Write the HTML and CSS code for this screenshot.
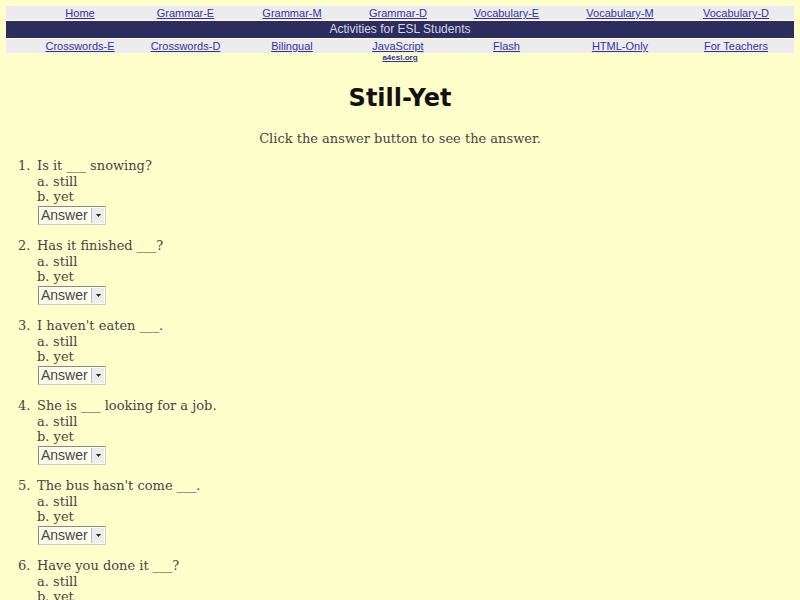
FILE: index.html
```html
<!DOCTYPE html>
<html>
<head>
<meta charset="utf-8">
<link rel="stylesheet" href="styles.css">
</head>
<body>
<div class="page">
  <div class="nav">
    <div class="row links">
      <a class="c1" href="#">Home</a>
      <a href="#">Grammar-E</a>
      <a href="#">Grammar-M</a>
      <a href="#">Grammar-D</a>
      <a href="#">Vocabulary-E</a>
      <a href="#">Vocabulary-M</a>
      <a href="#">Vocabulary-D</a>
    </div>
    <div class="bar">Activities for ESL Students</div>
    <div class="row links">
      <a class="c1" href="#">Crosswords-E</a>
      <a href="#">Crosswords-D</a>
      <a href="#">Bilingual</a>
      <a href="#">JavaScript</a>
      <a href="#">Flash</a>
      <a href="#">HTML-Only</a>
      <a href="#">For Teachers</a>
    </div>
  </div>
  <div class="site"><a href="#">a4esl.org</a></div>
  <h1 class="title">Still-Yet</h1>
  <p class="intro">Click the answer button to see the answer.</p>
  <ol class="quiz">
    <li>
      <div class="q">Is it ___ snowing?</div>
      <div class="opt">a. still</div>
      <div class="opt">b. yet</div>
      <div class="sel"><span class="sel-text">Answer</span><span class="sel-btn"><svg width="5" height="3" viewBox="0 0 5 3"><polygon points="0,0 5,0 2.5,3" fill="#222"/></svg></span></div>
    </li>
    <li>
      <div class="q">Has it finished ___?</div>
      <div class="opt">a. still</div>
      <div class="opt">b. yet</div>
      <div class="sel"><span class="sel-text">Answer</span><span class="sel-btn"><svg width="5" height="3" viewBox="0 0 5 3"><polygon points="0,0 5,0 2.5,3" fill="#222"/></svg></span></div>
    </li>
    <li>
      <div class="q">I haven't eaten ___.</div>
      <div class="opt">a. still</div>
      <div class="opt">b. yet</div>
      <div class="sel"><span class="sel-text">Answer</span><span class="sel-btn"><svg width="5" height="3" viewBox="0 0 5 3"><polygon points="0,0 5,0 2.5,3" fill="#222"/></svg></span></div>
    </li>
    <li>
      <div class="q">She is ___ looking for a job.</div>
      <div class="opt">a. still</div>
      <div class="opt">b. yet</div>
      <div class="sel"><span class="sel-text">Answer</span><span class="sel-btn"><svg width="5" height="3" viewBox="0 0 5 3"><polygon points="0,0 5,0 2.5,3" fill="#222"/></svg></span></div>
    </li>
    <li>
      <div class="q">The bus hasn't come ___.</div>
      <div class="opt">a. still</div>
      <div class="opt">b. yet</div>
      <div class="sel"><span class="sel-text">Answer</span><span class="sel-btn"><svg width="5" height="3" viewBox="0 0 5 3"><polygon points="0,0 5,0 2.5,3" fill="#222"/></svg></span></div>
    </li>
    <li>
      <div class="q">Have you done it ___?</div>
      <div class="opt">a. still</div>
      <div class="opt">b. yet</div>
      <div class="sel"><span class="sel-text">Answer</span><span class="sel-btn"><svg width="5" height="3" viewBox="0 0 5 3"><polygon points="0,0 5,0 2.5,3" fill="#222"/></svg></span></div>
    </li>
  </ol>
</div>
</body>
</html>
```
FILE: styles.css
```css
html, body {
  margin: 0;
  padding: 0;
  background: #ffffcc;
}
body {
  font-family: "DejaVu Serif", serif;
  color: #444444;
  overflow: hidden;
}
.page {
  padding: 6px 6px 0 6px;
}
.nav {
  display: flex;
  flex-direction: column;
  gap: 1px;
}
.row {
  display: grid;
  grid-template-columns: 126px 107px 106px 106px 111px 116px 116px;
  background: #ececef;
  height: 14px;
  align-items: center;
}
.links a {
  font-family: "Liberation Sans", Arial, sans-serif;
  font-size: 11px;
  color: #333399;
  text-align: center;
  line-height: 14px;
}
.links a.c1 {
  padding-left: 22px;
}
.bar {
  background: #2c2c5e;
  color: #d8d8e4;
  font-family: "Liberation Sans", Arial, sans-serif;
  font-size: 12px;
  text-align: center;
  height: 17px;
  line-height: 17px;
}
.site {
  text-align: center;
  font-family: "Liberation Sans", Arial, sans-serif;
  font-size: 8px;
  font-weight: bold;
  line-height: 10px;
}
.site a {
  color: #333399;
}
.title {
  font-family: "DejaVu Sans", sans-serif;
  font-weight: bold;
  font-size: 24px;
  color: #111111;
  text-align: center;
  margin: 20px 0 0 0;
  line-height: 30px;
}
.intro {
  text-align: center;
  font-size: 13px;
  margin: 18px 0 0 0;
  line-height: 16px;
}
.quiz {
  margin: 11px 0 0 0;
  padding-left: 12px;
  font-size: 13px;
  line-height: 15.5px;
  list-style: none;
  counter-reset: q;
}
.quiz li {
  counter-increment: q;
  display: grid;
  grid-template-columns: 19px auto;
  justify-content: start;
  justify-items: start;
  margin-bottom: 13.5px;
}
.quiz li::before {
  content: counter(q) ".";
  grid-column: 1;
  grid-row: 1;
}
.quiz li > * {
  grid-column: 2;
}
.sel {
  display: flex;
  align-items: stretch;
  margin-top: 1px;
  margin-left: 1px;
  width: 68px;
  height: 19px;
  box-sizing: border-box;
  border: 1px solid #888888;
  border-right-color: #cccccc;
  border-bottom-color: #cccccc;
  background: #ffffee;
}
.sel-text {
  flex: 1;
  font-family: "Liberation Sans", Arial, sans-serif;
  font-size: 14px;
  line-height: 17px;
  padding-left: 2px;
  color: #444;
}
.sel-btn {
  width: 12px;
  display: flex;
  align-items: center;
  justify-content: center;
  background: #ececec;
  border-left: 1px solid #bbbbbb;
  margin: 1px;
}
```
